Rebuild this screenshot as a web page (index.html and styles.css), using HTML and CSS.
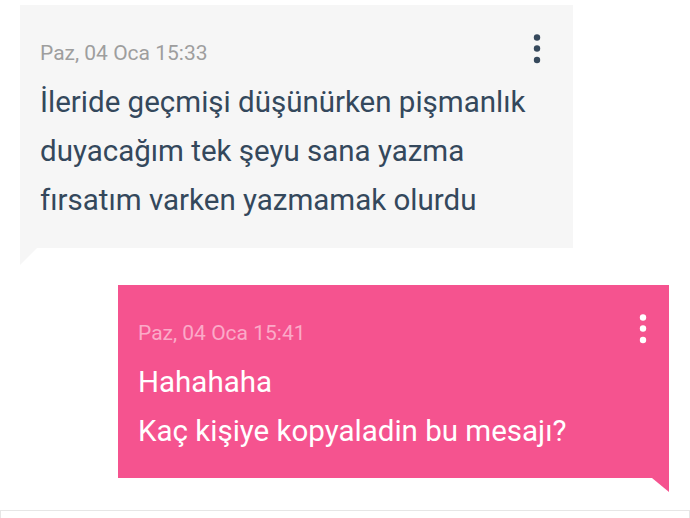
FILE: index.html
```html
<!DOCTYPE html>
<html lang="tr">
<head>
<meta charset="utf-8">
<link rel="stylesheet" href="styles.css">
</head>
<body>
<div class="chat">
  <div class="bubble in">
    <div class="head">
      <span class="time">Paz, 04 Oca 15:33</span>
      <svg class="dots" width="8" height="30" viewBox="0 0 8 30"><circle cx="4" cy="3.5" r="3.2"/><circle cx="4" cy="14.5" r="3.2"/><circle cx="4" cy="26" r="3.2"/></svg>
    </div>
    <div class="msg">İleride geçmişi düşünürken pişmanlık<br>duyacağım tek şeyu sana yazma<br>fırsatım varken yazmamak olurdu</div>
  </div>
  <div class="bubble out">
    <div class="head">
      <span class="time">Paz, 04 Oca 15:41</span>
      <svg class="dots" width="8" height="30" viewBox="0 0 8 30"><circle cx="4" cy="3.5" r="3.2"/><circle cx="4" cy="14.5" r="3.2"/><circle cx="4" cy="26" r="3.2"/></svg>
    </div>
    <div class="msg">Hahahaha<br>Kaç kişiye kopyaladin bu mesajı?</div>
  </div>
</div>
<div class="composer"></div>
</body>
</html>
```

FILE: styles.css
```css
html, body {
  margin: 0;
  padding: 0;
  background: #ffffff;
  font-family: Roboto, "Noto Sans", sans-serif;
  overflow: hidden;
}
.chat {
  padding-top: 5px;
  display: flex;
  flex-direction: column;
  gap: 37px;
}
.bubble {
  position: relative;
  box-sizing: border-box;
  padding: 29px 0 23px 20px;
}
.bubble.in {
  background: #f6f6f6;
  margin-left: 20px;
  width: 553px;
  padding-right: 32px;
}
.bubble.out {
  background: #f5538f;
  margin-left: 118px;
  width: 551px;
  padding-right: 22px;
  padding-bottom: 22px;
}
.bubble.in::after {
  content: "";
  position: absolute;
  left: 0;
  bottom: -17px;
  border-top: 17px solid #f6f6f6;
  border-right: 17px solid transparent;
}
.bubble.out::after {
  content: "";
  position: absolute;
  right: 0;
  bottom: -14px;
  border-top: 14px solid #f5538f;
  border-left: 17px solid transparent;
}
.head {
  display: flex;
  justify-content: space-between;
  align-items: flex-end;
}
.time {
  font-size: 21px;
  line-height: 24px;
  margin-bottom: -1px;
}
.in .time { color: #9e9e9e; }
.out .time { color: #fbaac8; }
.dots { display: block; }
.in .dots { fill: #36495c; }
.out .dots { fill: #ffffff; }
.msg {
  margin-top: 14px;
  font-size: 29.5px;
  line-height: 49px;
}
.in .msg { color: #34485c; }
.out .msg { color: #ffffff; }
.composer {
  margin-top: 32px;
  height: 40px;
  border: 1px solid #e6e6e6;
}
```
